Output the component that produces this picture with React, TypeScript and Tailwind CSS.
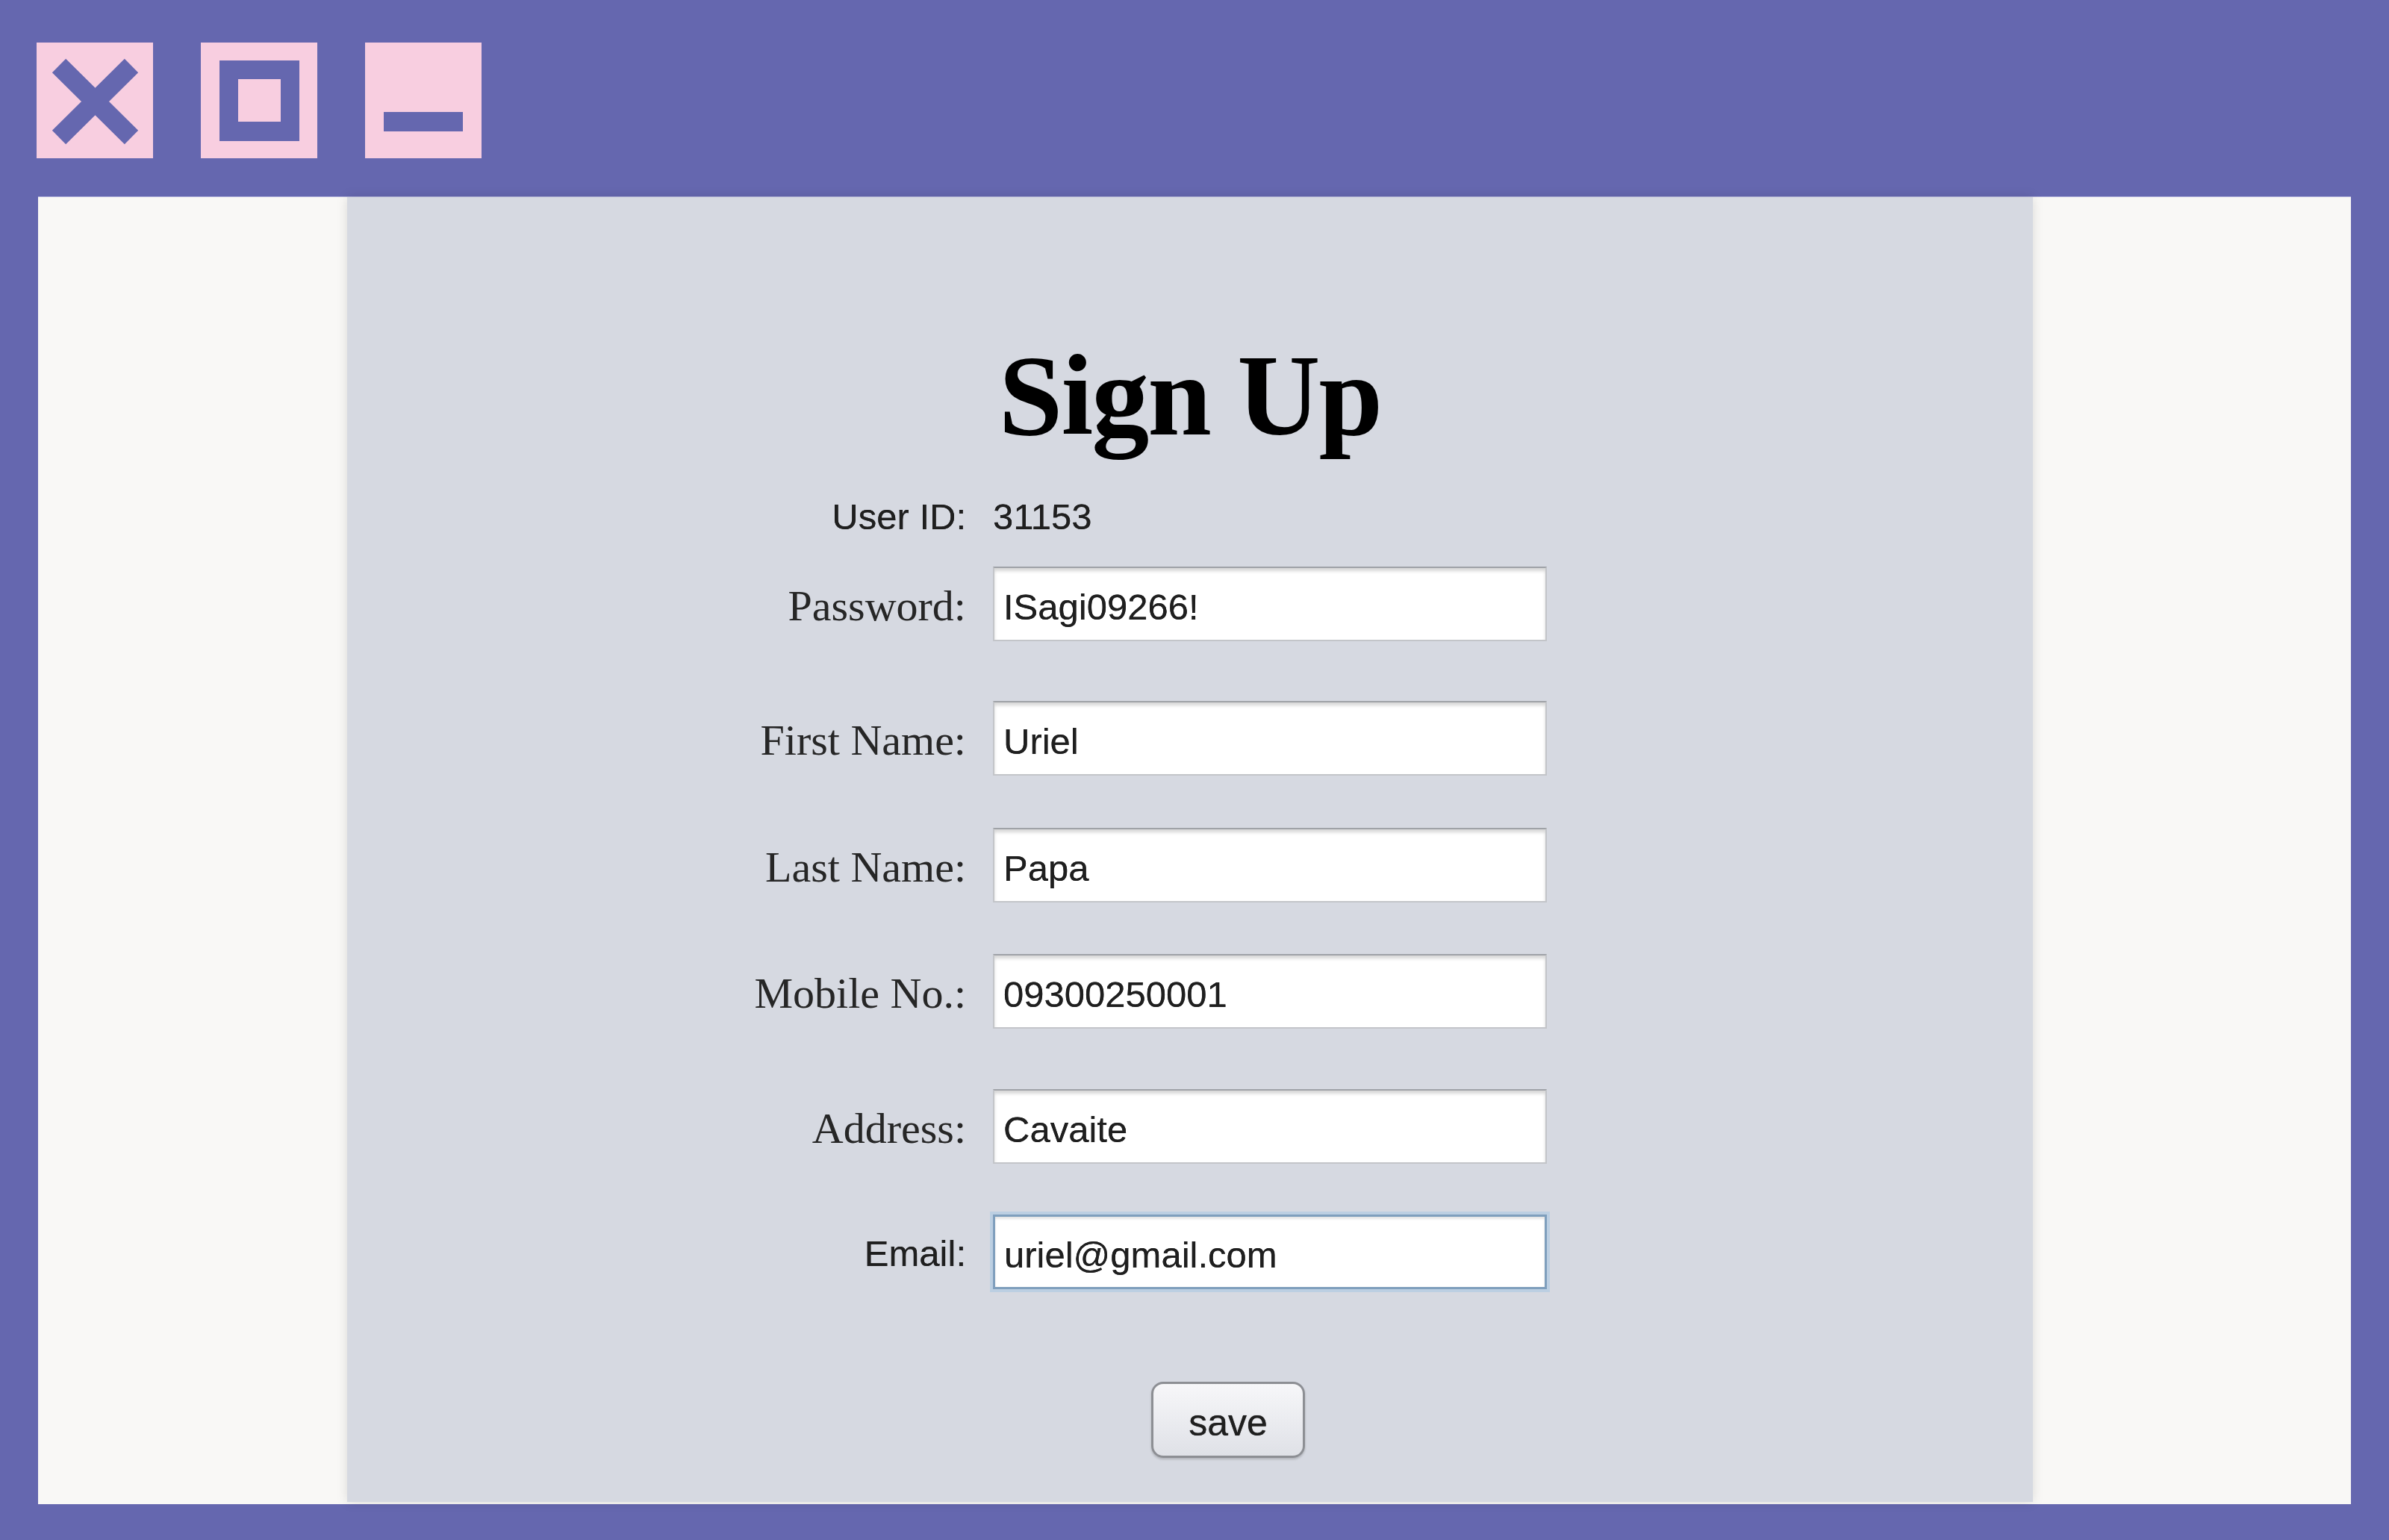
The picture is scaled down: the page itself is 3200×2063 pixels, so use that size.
import React from "react";

const serif = "font-['Liberation_Serif','Times_New_Roman',serif]";
const sans = "font-['Liberation_Sans',Arial,sans-serif]";

const fields = [
  { label: "Password:", value: "ISagi09266!", gap: "mt-[19px]" },
  { label: "First Name:", value: "Uriel", gap: "mt-[80px]" },
  { label: "Last Name:", value: "Papa", gap: "mt-[70px]" },
  { label: "Mobile No.:", value: "09300250001", gap: "mt-[69px]" },
  { label: "Address:", value: "Cavaite", gap: "mt-[81px]" },
];

const WindowButton = ({ children }: { children: React.ReactNode }) => (
  <div className="h-[155px] w-[156px] bg-[#f8cee0]">
    <svg width="156" height="155" viewBox="0 0 156 155">
      {children}
    </svg>
  </div>
);

export default function App() {
  return (
    <div className="flex h-[2063px] w-[3200px] flex-col bg-[#6567af]">
      {/* title bar */}
      <div className="flex h-[263px] gap-[64px] pl-[49px] pt-[57px]">
        <WindowButton>
          <path
            d="M30 31 L127 127 M127 31 L30 127"
            stroke="#6567af"
            strokeWidth="26"
            strokeLinecap="butt"
          />
        </WindowButton>
        <WindowButton>
          <path
            d="M25 24 H132 V132 H25 Z M50 49 V106 H107 V49 Z"
            fill="#6567af"
            fillRule="evenodd"
          />
        </WindowButton>
        <WindowButton>
          <rect x="25" y="93" width="106" height="26" fill="#6567af" />
        </WindowButton>
      </div>

      {/* window body */}
      <div className="mx-[51px] flex h-[1752px] border-t border-[#a8a9d6] bg-[#f9f8f6] pb-[3px]">
        <div className="ml-[414px] flex w-[2258px] flex-col bg-[#d6d9e1] pt-[189px] shadow-[0_0_14px_rgba(0,0,0,0.13)]">
          <h1 className={`${serif} text-center text-[154px] font-bold leading-none tracking-[-2px] text-black`}>
            Sign Up
          </h1>

          <div className={`${sans} mt-[33px] flex h-[100px] items-center pt-[4px] text-[49px] leading-none text-[#1f1f1f] [text-shadow:0_0_0.6px_#1f1f1f]`}>
            <span className="w-[865px] pr-[36px] text-right">User ID:</span>
            <span>31153</span>
          </div>

          {fields.map((f) => (
            <div key={f.label} className={`${f.gap} flex h-[100px] items-center`}>
              <label className={`${serif} w-[865px] pr-[36px] pt-[5px] text-right text-[58px] leading-none text-[#262626]`}>
                {f.label}
              </label>
              <input
                readOnly
                value={f.value}
                className={`${sans} h-[100px] w-[742px] border-2 border-[#c3c5c9] border-t-[#9fa2a7] bg-white px-3 pt-[7px] text-[49px] text-[#1f1f1f] shadow-[inset_0_4px_4px_rgba(0,0,0,0.16)] outline-none [text-shadow:0_0_0.6px_#1f1f1f]`}
              />
            </div>
          ))}

          <div className="mt-[68px] flex h-[100px] items-center">
            <label className={`${sans} w-[865px] pr-[36px] pt-[5px] text-right text-[49px] leading-none text-[#1f1f1f] [text-shadow:0_0_0.6px_#1f1f1f]`}>
              Email:
            </label>
            <input
              readOnly
              value="uriel@gmail.com"
              className={`${sans} h-[100px] w-[742px] border-[3px] border-[#7f9fbd] bg-white px-3 pt-[7px] text-[49px] text-[#1f1f1f] shadow-[0_0_0_4px_#bccfe2,inset_0_3px_3px_rgba(0,0,0,0.1)] outline-none [text-shadow:0_0_0.6px_#1f1f1f]`}
            />
          </div>

          <div className="mt-[124px] flex">
            <button
              className={`${sans} ml-[1077px] h-[102px] w-[206px] rounded-[16px] border-[3px] border-[#8d8f94] bg-gradient-to-b from-[#f7f7f9] to-[#dfe1e7] pt-[8px] text-[50px] leading-none text-[#1f1f1f] shadow-[0_2px_3px_rgba(0,0,0,0.18)] [text-shadow:0_0_0.8px_#1f1f1f]`}
            >
              save
            </button>
          </div>
        </div>
      </div>
    </div>
  );
}
